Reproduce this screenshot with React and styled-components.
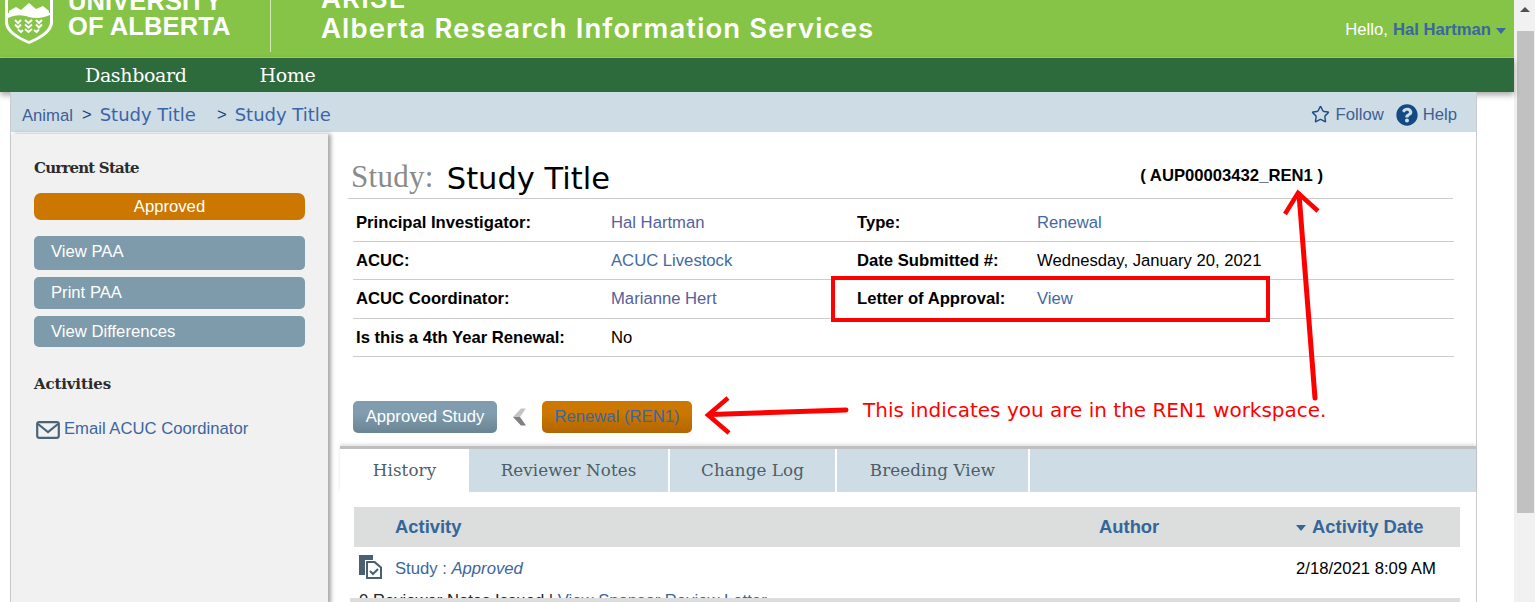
import React from "react";
import styled, { createGlobalStyle } from "styled-components";
import { FaQuestionCircle } from "react-icons/fa";
import { Star } from "lucide-react";

const sans = `"Liberation Sans", Arial, sans-serif`;
const slab = `"DejaVu Serif", "Liberation Serif", serif`;
const verdana = `"DejaVu Sans", Verdana, sans-serif`;

const Global = createGlobalStyle`
  html, body { margin: 0; padding: 0; background: #fff; overflow: hidden; height: 602px; }
  * { box-sizing: border-box; }
  body { font-family: ${sans}; font-size: 16.67px; color: #000; }
`;

const Page = styled.div`
  position: relative;
  display: flex;
  width: 1535px;
  height: 602px;
  overflow: hidden;
`;
const Content = styled.div`
  width: 1514px;
  flex: none;
`;
const Header = styled.header`
  height: 58px;
  background: #85c446;
  border-bottom: 1px solid #d9c13c;
  display: flex;
  align-items: flex-end;
  overflow: hidden;
  padding-left: 5px;
`;
const Crest = styled.svg`
  flex: none;
  width: 48px;
  height: 60px;
  margin-bottom: 12px;
`;
const Wordmark = styled.div`
  flex: none;
  width: 202px;
  margin-left: 15px;
  padding-bottom: 18px;
  color: #fff;
  font-weight: 700;
  font-size: 25.5px;
  line-height: 25px;
  letter-spacing: 0.1px;
`;
const HeaderRule = styled.div`
  flex: none;
  width: 1px;
  height: 52px;
  margin-bottom: 5px;
  background: #d3e8b8;
`;
const AppTitle = styled.div`
  flex: none;
  margin-left: 50px;
  padding-bottom: 14px;
  color: #fff;
  font-family: Inter, Roboto, sans-serif;
  font-weight: 600;
  font-size: 27.5px;
  line-height: 30px;
  letter-spacing: 1.1px;
`;
const Hello = styled.div`
  margin-left: auto;
  padding: 0 8px 17px 0;
  color: #fff;
  line-height: 20px;
  display: flex;
  align-items: center;
`;
const HelloName = styled.a`
  color: #3b66a0;
  font-weight: 700;
  margin-left: 5px;
`;
const Caret = styled.span`
  width: 0;
  height: 0;
  margin: 2px 0 0 5px;
  border-left: 5px solid transparent;
  border-right: 5px solid transparent;
  border-top: 6px solid #3b66a0;
`;
const Nav = styled.nav`
  height: 34px;
  background: #2d6a3c;
  display: flex;
  align-items: center;
  gap: 73px;
  padding-left: 85px;
  box-shadow: 0 3px 6px rgba(0, 0, 0, 0.35);
  position: relative;
`;
const NavLink = styled.a`
  color: #fff;
  font-family: ${slab};
  font-size: 19px;
  letter-spacing: -0.35px;
`;
const Body = styled.div`
  position: relative;
  margin-left: 10px;
  width: 1467px;
  height: 510px;
  border-left: 1px solid #ccc;
  border-right: 1px solid #ccc;
`;
const Crumbs = styled.div`
  height: 40px;
  background: #cddce5;
  display: flex;
  align-items: center;
  padding: 5px 19px 0 11px;
  color: #3b64a8;
`;
const CrumbRoot = styled.a`
  color: #3f5f95;
  margin-top: 2px;
`;
const CrumbSep = styled.span`
  color: #1f3f78;
  margin: 0 8px 0 ${(p) => p.$gap}px;
`;
const CrumbLink = styled.a`
  font-family: ${verdana};
  font-size: 18px;
  color: #3b64a8;
`;
const CrumbTools = styled.div`
  margin-left: auto;
  display: flex;
  align-items: center;
  color: #3f5f95;
`;
const ToolText = styled.span`
  margin: 0 12px 0 6px;
  &:last-child { margin: 0 0 0 5px; }
`;
const Columns = styled.div`
  display: grid;
  grid-template-columns: 317px 1136px;
  column-gap: 12px;
  padding-top: 2px;
`;
const Sidebar = styled.aside`
  height: 470px;
  background: #f1f1f1;
  box-shadow: 3px 0 4px rgba(0, 0, 0, 0.35);
  padding: 24px 23px 0;
  display: flex;
  flex-direction: column;
`;
const SideHeading = styled.h3`
  margin: 0;
  font-family: ${slab};
  font-size: 15px;
  line-height: 20px;
  font-weight: 700;
  letter-spacing: -0.8px;
  color: #2c2c2c;
`;
const StatePill = styled.div`
  margin-top: 15px;
  height: 27px;
  border-radius: 7px;
  background: #cb7700;
  color: #fff;
  display: flex;
  align-items: center;
  justify-content: center;
`;
const SideButton = styled.a`
  display: flex;
  align-items: center;
  height: ${(p) => p.$h}px;
  margin-top: ${(p) => p.$top}px;
  padding: 0 0 ${(p) => p.$lift}px 17px;
  border-radius: 5px;
  background: #7e9bac;
  color: #fff;
`;
const ActivitiesHeading = styled(SideHeading)`
  margin-top: 27px;
  letter-spacing: -0.15px;
`;
const EmailRow = styled.a`
  display: flex;
  align-items: center;
  margin: 24px 0 0 2px;
  color: #3b66a0;
  gap: 4px;
`;
const EmailIcon = styled.svg`
  width: 24px;
  height: 18px;
  margin-top: 3px;
  flex: none;
`;
const Main = styled.main`
  min-width: 0;
`;
const TitleRow = styled.div`
  height: 65px;
  margin: 0 23px 0 8px;
  border-bottom: 1px solid #ccc;
  display: flex;
  align-items: flex-end;
  padding-left: 3px;
`;
const TitleLabel = styled.span`
  font-family: "Liberation Serif", serif;
  color: #8a8a8a;
  font-size: 31px;
  line-height: 42px;
  letter-spacing: 0.3px;
`;
const TitleText = styled.span`
  font-family: ${verdana};
  font-size: 30.5px;
  line-height: 38px;
  margin-left: 13px;
`;
const StudyId = styled.span`
  margin-left: auto;
  margin-right: 130px;
  font-weight: 700;
  line-height: 20px;
  align-self: flex-start;
  padding-top: 32px;
`;
const Facts = styled.div`
  margin: 5px 22px 0 13px;
`;
const FactRow = styled.div`
  display: grid;
  grid-template-columns: 255px 246px 180px 1fr;
  height: ${(p) => p.$h}px;
  padding-left: 3px;
  align-items: center;
  border-bottom: 1px solid #ccc;
`;
const FactLabel = styled.span`
  font-weight: 700;
`;
const FactValue = styled.a`
  color: ${(p) => p.$color};
`;
const Workspaces = styled.div`
  display: flex;
  align-items: center;
  margin: 44px 0 0 13px;
  height: 32px;
`;
const WorkspaceButton = styled.a`
  display: flex;
  align-items: center;
  justify-content: center;
  width: ${(p) => p.$w}px;
  height: 32px;
  border-radius: 5px;
  color: ${(p) => (p.$current ? "#3b66a0" : "#fff")};
  background: ${(p) =>
    p.$current
      ? "linear-gradient(#cb7700 40%, #b06600)"
      : "linear-gradient(#7f9dae 40%, #6b8493)"};
`;
const Chevron = styled.svg`
  width: 17px;
  height: 18px;
  margin: 0 14px 0 14px;
`;
const TabBar = styled.div`
  margin-top: 13px;
  display: flex;
  height: 46px;
  border-top: 3px solid #bfbfbf;
  box-shadow: 0 -2px 3px rgba(0, 0, 0, 0.12);
  background: #cddce5;
`;
const Tab = styled.a`
  width: ${(p) => p.$w}px;
  flex: none;
  display: flex;
  align-items: center;
  justify-content: center;
  padding-bottom: 2px;
  font-family: ${slab};
  font-size: 16.7px;
  letter-spacing: 0.1px;
  color: #4f5d66;
  background: ${(p) => (p.$active ? "#fff" : "transparent")};
  border-right: ${(p) => (p.$active ? "0" : "2px solid #fff")};
`;
const Table = styled.div`
  margin: 15px 16px 0 14px;
`;
const TableHead = styled.div`
  display: grid;
  grid-template-columns: 745px 197px 164px;
  height: 40px;
  align-items: center;
  background: #dcdddd;
  color: #336699;
  font-weight: 700;
  font-size: 18.4px;
`;
const HeadCell = styled.span`
  display: flex;
  align-items: center;
  padding-left: ${(p) => p.$pad || 0}px;
`;
const SortCaret = styled.span`
  width: 0;
  height: 0;
  margin: 2px 6px 0 0;
  border-left: 5.5px solid transparent;
  border-right: 5.5px solid transparent;
  border-top: 6px solid #336699;
`;
const TableRow = styled.div`
  display: grid;
  grid-template-columns: 745px 197px 164px;
  height: 42px;
  padding-top: 2px;
  align-items: center;
`;
const ActivityCell = styled.a`
  display: flex;
  align-items: center;
  color: #3b66a0;
  padding-left: 5px;
`;
const DocIcon = styled.svg`
  width: 24px;
  height: 24px;
  flex: none;
  margin-right: 12px;
  margin-top: -4px;
`;
const DateCell = styled.span`
  grid-column: 3;
`;
const NoteLine = styled.div`
  height: 9px;
  overflow: hidden;
  padding: 3px 0 0 5px;
  line-height: 18px;
  color: #222;
`;
const NoteLink = styled.a`
  color: #3b66a0;
`;
const NextBand = styled.div`
  height: 10px;
  margin-left: -4px;
  background: #dcdddd;
`;
const Scrollbar = styled.div`
  flex: 1;
  background: #f1f1f1;
  display: flex;
  flex-direction: column;
  align-items: center;
`;
const ScrollArrow = styled.div`
  margin-top: 7px;
  width: 0;
  height: 0;
  border-left: 5px solid transparent;
  border-right: 5px solid transparent;
  border-bottom: 5px solid #505050;
`;
const ScrollThumb = styled.div`
  margin-top: 19px;
  width: 17px;
  height: 482px;
  margin-left: 2px;
  background: #c1c1c1;
`;
const Markup = styled.svg`
  position: absolute;
  left: 0;
  top: 0;
  width: 1535px;
  height: 602px;
  pointer-events: none;
`;
const MarkupNote = styled.div`
  position: absolute;
  left: 863px;
  top: 398px;
  color: #f00;
  font-family: ${verdana};
  font-size: 20px;
  line-height: 24px;
  white-space: nowrap;
`;

const link = "#436aa3";
const visited = "#55619c";
const facts = [
  { h: 38, cells: ["Principal Investigator:", "Hal Hartman", "Type:", "Renewal"], c1: visited, c2: link },
  { h: 38, cells: ["ACUC:", "ACUC Livestock", "Date Submitted #:", "Wednesday, January 20, 2021"], c1: link, c2: "#000" },
  { h: 39, cells: ["ACUC Coordinator:", "Marianne Hert", "Letter of Approval:", "View"], c1: visited, c2: link },
  { h: 38, cells: ["Is this a 4th Year Renewal:", "No"], c1: "#000" },
];

export default function App() {
  return (
    <Page>
      <Global />
      <Content>
        <Header>
          <Crest viewBox="0 -15 48 60" aria-hidden="true">
            <path d="M0 -15H48V22C48 32 36 39 24 44C12 39 0 32 0 22Z" fill="#fff" />
            <path d="M3 -15H45V13H3Z" fill="#85c446" />
            <path d="M4 11L11 7L16 10L24 3L31 9L38 6L44 11V14H4Z" fill="#fff" />
            <path d="M3 18C11 14 18 15 24 17C31 19 38 18 45 15V22C45 30 34 37 24 41C14 37 3 30 3 22Z" fill="#85c446" />
            <g fill="none" stroke="#fff" strokeWidth="2">
              <path d="M10 20L13 23L16 20M10 24.500L13 27.500L16 24.500" />
              <path d="M20 20L23.500 23L27 20M20 24.500L23.500 27.500L27 24.500M20 29L23.500 32L27 29" />
              <path d="M31 20L34 23L37 20M31 24.500L34 27.500L37 24.500" />
              <path d="M13 29.500L16 32L18 30" />
              <path d="M29 30L31.500 32L34 29.500" />
            </g>
          </Crest>
          <Wordmark>
            UNIVERSITY
            <br />
            OF ALBERTA
          </Wordmark>
          <HeaderRule />
          <AppTitle>
            ARISE
            <br />
            Alberta Research Information Services
          </AppTitle>
          <Hello>
            Hello, <HelloName>Hal Hartman</HelloName>
            <Caret />
          </Hello>
        </Header>
        <Nav>
          <NavLink>Dashboard</NavLink>
          <NavLink>Home</NavLink>
        </Nav>
        <Body>
          <Crumbs>
            <CrumbRoot>Animal</CrumbRoot>
            <CrumbSep $gap={9}>&gt;</CrumbSep>
            <CrumbLink>Study Title</CrumbLink>
            <CrumbSep $gap={21}>&gt;</CrumbSep>
            <CrumbLink>Study Title</CrumbLink>
            <CrumbTools>
              <Star size={19} color="#1f4e86" strokeWidth={1.8} />
              <ToolText>Follow</ToolText>
              <FaQuestionCircle size={22} color="#144a83" />
              <ToolText>Help</ToolText>
            </CrumbTools>
          </Crumbs>
          <Columns>
            <Sidebar>
              <SideHeading>Current State</SideHeading>
              <StatePill>Approved</StatePill>
              <SideButton $h={34} $top={16} $lift={2}>View PAA</SideButton>
              <SideButton $h={32} $top={7} $lift={0}>Print PAA</SideButton>
              <SideButton $h={31} $top={7} $lift={0}>View Differences</SideButton>
              <ActivitiesHeading>Activities</ActivitiesHeading>
              <EmailRow>
                <EmailIcon viewBox="0 0 24 18" aria-hidden="true">
                  <rect x="1.2" y="1.2" width="21.6" height="15.6" rx="2" fill="none" stroke="#4a6478" strokeWidth="2.2" />
                  <path d="M2 3L12 11L22 3" fill="none" stroke="#4a6478" strokeWidth="2.2" />
                </EmailIcon>
                Email ACUC Coordinator
              </EmailRow>
            </Sidebar>
            <Main>
              <TitleRow>
                <TitleLabel>Study:</TitleLabel>
                <TitleText>Study Title</TitleText>
                <StudyId>( AUP00003432_REN1 )</StudyId>
              </TitleRow>
              <Facts>
                {facts.map((row) => (
                  <FactRow key={row.cells[0]} $h={row.h}>
                    <FactLabel>{row.cells[0]}</FactLabel>
                    <FactValue $color={row.c1}>{row.cells[1]}</FactValue>
                    {row.cells[2] && <FactLabel>{row.cells[2]}</FactLabel>}
                    {row.cells[3] && <FactValue $color={row.c2}>{row.cells[3]}</FactValue>}
                  </FactRow>
                ))}
              </Facts>
              <Workspaces>
                <WorkspaceButton $w={144}>Approved Study</WorkspaceButton>
                <Chevron viewBox="0 0 17 18" aria-hidden="true">
                  <path d="M10 .5H15L9 9H2Z" fill="#c4c4c4" />
                  <path d="M2 9H9L15 17.500H10Z" fill="#808080" />
                </Chevron>
                <WorkspaceButton $w={150} $current>Renewal (REN1)</WorkspaceButton>
              </Workspaces>
              <TabBar>
                <Tab $w={129} $active>History</Tab>
                <Tab $w={201}>Reviewer Notes</Tab>
                <Tab $w={167}>Change Log</Tab>
                <Tab $w={193}>Breeding View</Tab>
              </TabBar>
              <Table>
                <TableHead>
                  <HeadCell $pad={41}>Activity</HeadCell>
                  <HeadCell>Author</HeadCell>
                  <HeadCell>
                    <SortCaret />
                    Activity Date
                  </HeadCell>
                </TableHead>
                <TableRow>
                  <ActivityCell>
                    <DocIcon viewBox="0 0 24 24" aria-hidden="true">
                      <path d="M0 0H14V5H6V20H0Z" fill="#4a6072" />
                      <path d="M7 6H16L23 12V24H7Z" fill="#4a6072" />
                      <path d="M9 8H15L21 13V22H9Z" fill="#fff" />
                      <path d="M11 16L14 19L19 14" fill="none" stroke="#4a6072" strokeWidth="2" />
                    </DocIcon>
                    <span>
                      Study : <em>Approved</em>
                    </span>
                  </ActivityCell>
                  <DateCell>2/18/2021 8:09 AM</DateCell>
                </TableRow>
                <NoteLine>
                  0 Reviewer Notes Issued | <NoteLink>View Sponsor Review Letter</NoteLink>
                </NoteLine>
                <NextBand />
              </Table>
            </Main>
          </Columns>
        </Body>
      </Content>
      <Scrollbar>
        <ScrollArrow />
        <ScrollThumb />
      </Scrollbar>
      <Markup viewBox="0 0 1535 602" aria-hidden="true">
        <g fill="none" stroke="#f00" strokeLinecap="round" strokeLinejoin="miter">
          <rect x="833" y="278" width="435" height="42" strokeWidth="4" strokeLinecap="butt" />
          <path d="M1315 398L1299 194" strokeWidth="5" />
          <path d="M1285 214L1298 193L1318 211" strokeWidth="4.5" strokeLinecap="butt" />
          <path d="M846 410L711 414.500" strokeWidth="5" />
          <path d="M728 398L708 415L729 433" strokeWidth="4.5" strokeLinecap="butt" />
        </g>
      </Markup>
      <MarkupNote>This indicates you are in the REN1 workspace.</MarkupNote>
    </Page>
  );
}
